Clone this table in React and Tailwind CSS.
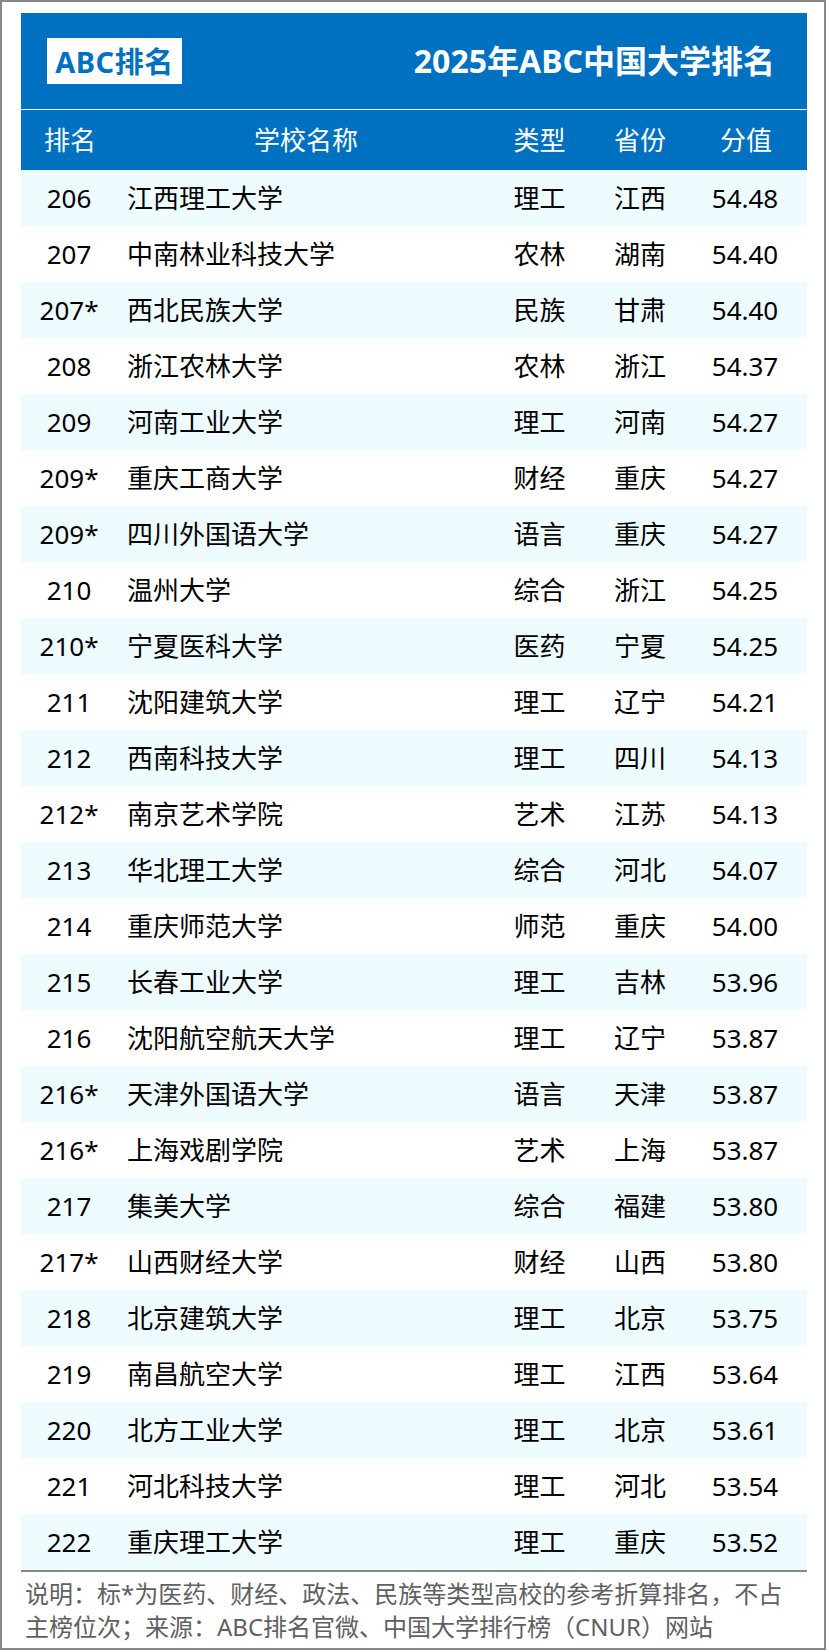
import React from 'react';

const rows = [
    ['206', '江西理工大学', '理工', '江西', '54.48'],
    ['207', '中南林业科技大学', '农林', '湖南', '54.40'],
    ['207*', '西北民族大学', '民族', '甘肃', '54.40'],
    ['208', '浙江农林大学', '农林', '浙江', '54.37'],
    ['209', '河南工业大学', '理工', '河南', '54.27'],
    ['209*', '重庆工商大学', '财经', '重庆', '54.27'],
    ['209*', '四川外国语大学', '语言', '重庆', '54.27'],
    ['210', '温州大学', '综合', '浙江', '54.25'],
    ['210*', '宁夏医科大学', '医药', '宁夏', '54.25'],
    ['211', '沈阳建筑大学', '理工', '辽宁', '54.21'],
    ['212', '西南科技大学', '理工', '四川', '54.13'],
    ['212*', '南京艺术学院', '艺术', '江苏', '54.13'],
    ['213', '华北理工大学', '综合', '河北', '54.07'],
    ['214', '重庆师范大学', '师范', '重庆', '54.00'],
    ['215', '长春工业大学', '理工', '吉林', '53.96'],
    ['216', '沈阳航空航天大学', '理工', '辽宁', '53.87'],
    ['216*', '天津外国语大学', '语言', '天津', '53.87'],
    ['216*', '上海戏剧学院', '艺术', '上海', '53.87'],
    ['217', '集美大学', '综合', '福建', '53.80'],
    ['217*', '山西财经大学', '财经', '山西', '53.80'],
    ['218', '北京建筑大学', '理工', '北京', '53.75'],
    ['219', '南昌航空大学', '理工', '江西', '53.64'],
    ['220', '北方工业大学', '理工', '北京', '53.61'],
    ['221', '河北科技大学', '理工', '河北', '53.54'],
    ['222', '重庆理工大学', '理工', '重庆', '53.52'],
];

const font = { fontFamily: '"Noto Sans", "Noto Sans CJK SC", sans-serif' };

const App = () => {
    return (
        <div className="w-[826px] h-[1650px] border-2 border-[#888888] bg-white pt-[11px] pl-[19px] pr-[17px]" style={font}>
            {/* title bar */}
            <div className="h-[96px] bg-[#0070c0] flex items-center justify-between pl-[26px] pr-[32px]">
                <div className="w-[135px] h-[46px] bg-white flex items-center justify-center text-[#0070c0] text-[29px] font-bold leading-none tracking-[0.5px]">
                    ABC排名
                </div>
                <div className="text-white text-[32px] font-bold leading-none">2025年ABC中国大学排名</div>
            </div>
            <div className="h-px bg-white"></div>

            {/* column header */}
            <div className="h-[60px] bg-[#0070c0] flex items-center text-white text-[26px] leading-none">
                <div className="w-[98px] text-center">排名</div>
                <div className="w-[374px] text-center">学校名称</div>
                <div className="w-[93px] text-center">类型</div>
                <div className="w-[108px] text-center">省份</div>
                <div className="w-[104px] text-center">分值</div>
            </div>

            {/* rows */}
            {rows.map((r, i) => (
                <div
                    key={i}
                    className={`h-[56px] flex items-center text-black text-[26px] leading-none ${
                        i % 2 === 0 ? 'bg-[#eefbff]' : 'bg-white'
                    }`}
                >
                    <div className="w-[96px] text-center">{r[0]}</div>
                    <div className="w-[376px] pl-[10px]">{r[1]}</div>
                    <div className="w-[93px] text-center">{r[2]}</div>
                    <div className="w-[108px] text-center">{r[3]}</div>
                    <div className="w-[102px] text-center">{r[4]}</div>
                </div>
            ))}
            <div className="h-[2px] bg-[#888888]"></div>

            {/* note */}
            <div className="pt-[5px] pl-[4px] text-[#606060] text-[24px] leading-[33px]">
                <div>说明：标*为医药、财经、政法、民族等类型高校的参考折算排名，不占</div>
                <div>主榜位次；来源：ABC排名官微、中国大学排行榜（CNUR）网站</div>
            </div>
        </div>
    );
};

export default App;
